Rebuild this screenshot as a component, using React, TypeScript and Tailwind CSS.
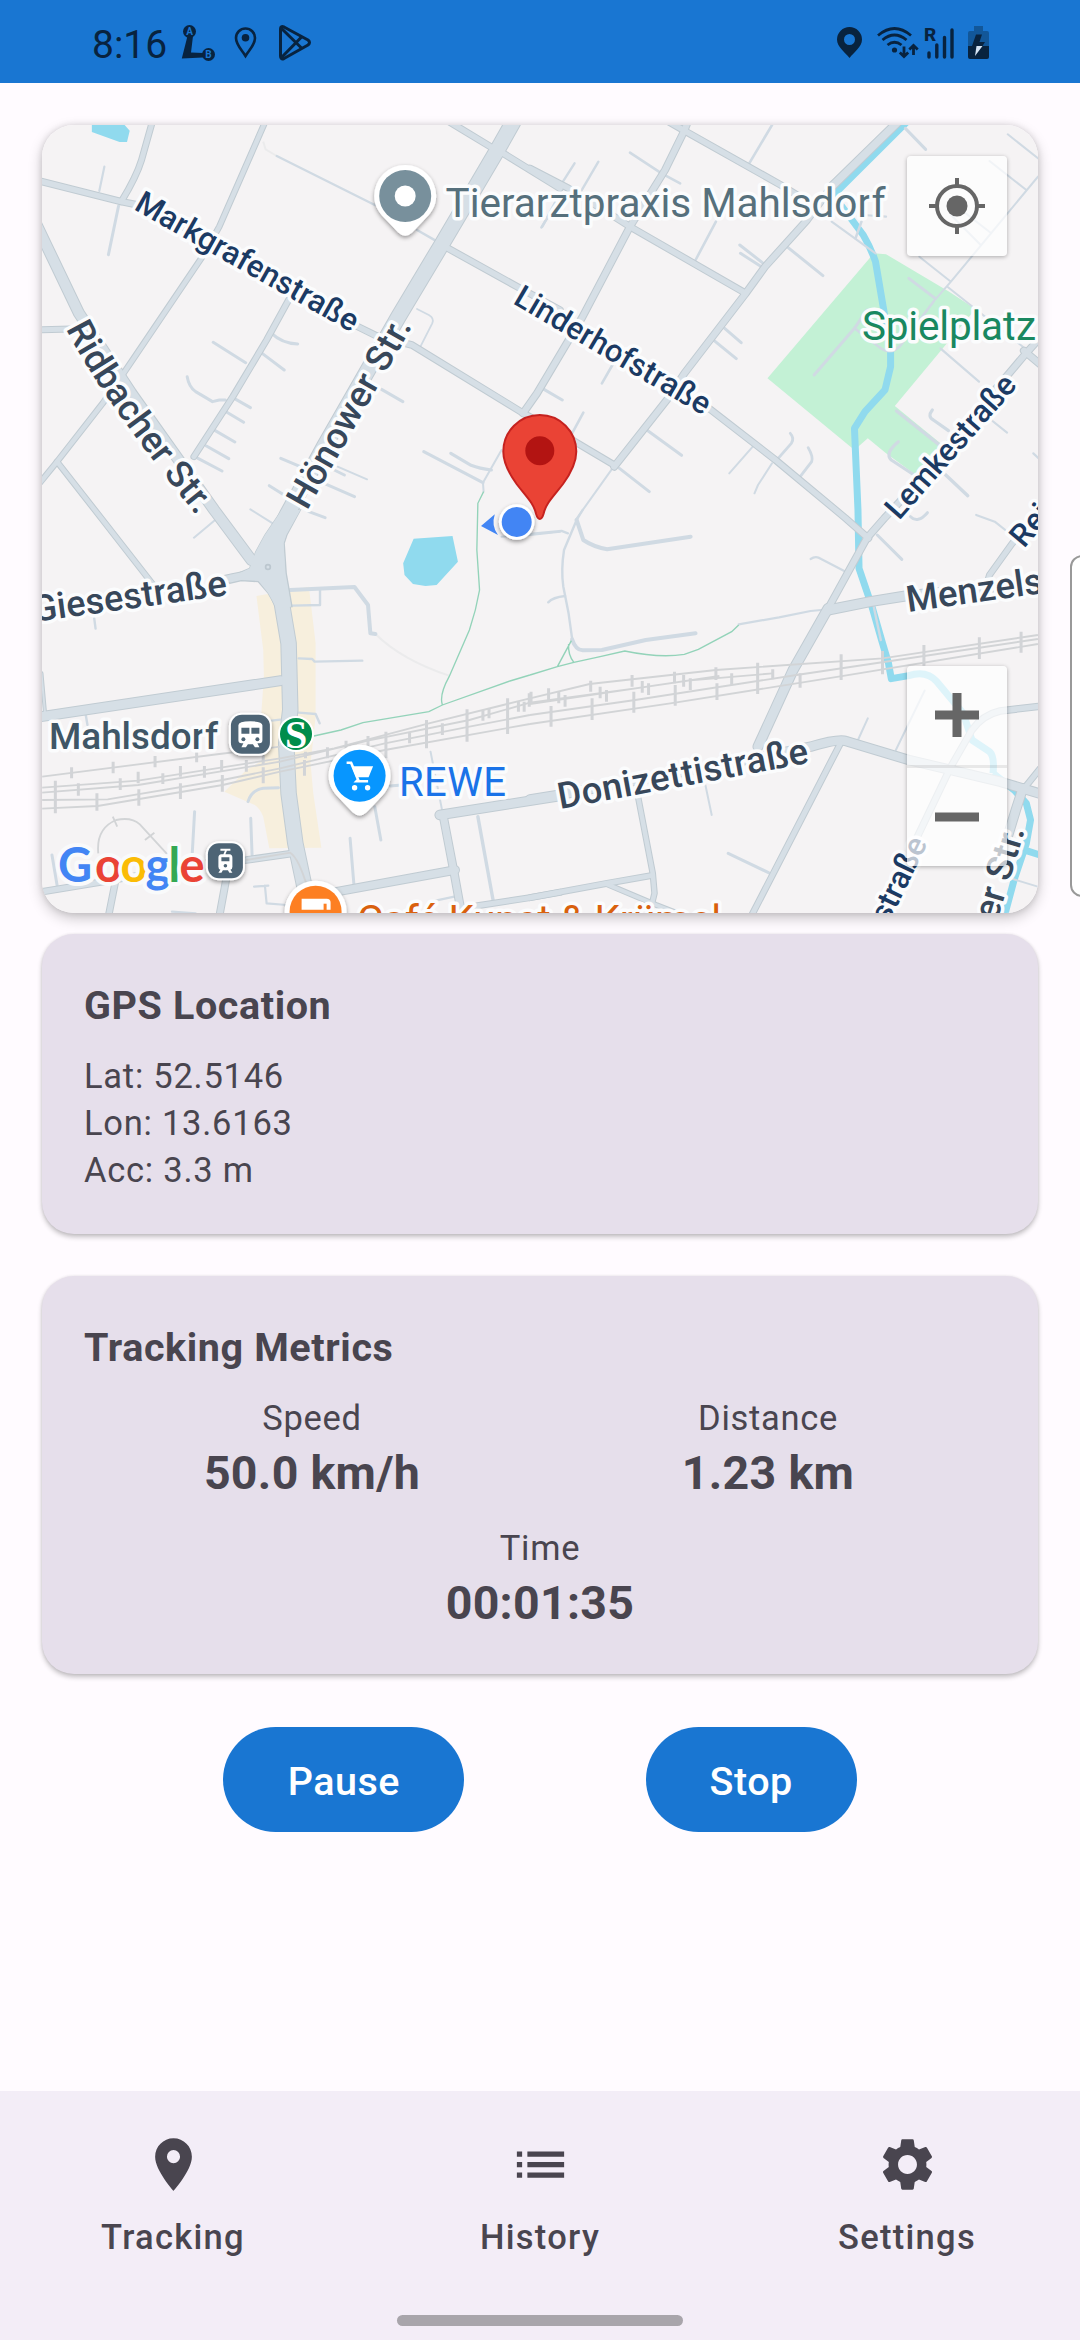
import type { ReactNode } from "react";
import { MdList, MdLocationOn, MdSettings } from "react-icons/md";

/* The map is drawn in two halves, each with its own survey grid. */
const WEST = "translate(30 110) scale(0.33801 0.33333)";
const EAST = "translate(530 110) scale(0.35077 0.33333)";

type Line = [width: number, d: string];

const westRoads: Line[] = [
  [7.5, "M20 211L270 275L320 285L420 330L640 470L960 645L1030 680L1130 705L1460 910L1600 990"],
  [7, "M362 35L330 150Q315 200 270 275"],
  [6.5, "M696 35L560 350L510 440L270 800L215 880L80 1055L20 1130"],
  [6.5, "M80 1055L215 1230L365 1425"],
  [7, "M20 660L120 657"],
  [7, "M765 570L700 690L600 860L485 1040"],
  [7.5, "M1240 35L1362 110L1400 130L1568 235"],
  [7.5, "M1210 400L1450 535L1568 600"],
  [11, "M20 1822L742 1712"],
  [4, "M34 1690L45 1815"],
  [7.5, "M20 2348L200 2318L330 2295L520 2260L640 2250L780 2230"],
  [7.5, "M252 2318L232 2420"],
  [8, "M580 2310L560 2420"],
  [9.5, "M860 2354L1258 2280"],
  [10.5, "M1212 2115L1568 2058"],
  [9, "M1222 2115L1255 2290L1280 2430"],
  [7, "M1275 2395L1479 2363L1568 2347"],
  [12, "M15 335L145 610L300 850L545 1200L655 1350L705 1370"],
  [9, "M560 1412L600 1403L655 1392L705 1375"],
  [16.5, "M1430 35L1380 125L1220 400L1090 620L870 1010L760 1215L705 1330L712 1400L745 1480L765 1600L770 1800L758 1900L765 2050L785 2200L812 2330L830 2420"],
];

const eastRoads: Line[] = [
  [7.5, "M0 175L110 235L240 320L285 350L615 550"],
  [7.5, "M395 35L440 62L715 225L800 280"],
  [7.5, "M0 600L510 895L700 1050L900 1225L965 1285"],
  [8, "M450 35L440 62L385 180L285 350L150 620L20 850L-20 910"],
  [7.5, "M120 990L240 1065"],
  [9.5, "M1050 35L860 230"],
  [8, "M860 230L790 330L670 470L615 550L440 790L390 870L240 1070"],
  [8, "M1470 665L1410 735L1370 785L1050 1180L1010 1225L960 1285L905 1390L850 1495"],
  [8, "M1408 722L1460 768"],
  [7, "M1450 1200L1375 1300L1310 1395L1300 1430"],
  [11, "M850 1500L970 1475L1070 1458L1460 1415"],
  [11, "M850 1495L750 1680L650 1910"],
  [10.5, "M0 2068L80 2055L640 1945L800 1910Q880 1885 900 1893L1080 1950L1340 2015L1460 2053"],
  [6.5, "M308 2060L350 2290L355 2350L348 2380"],
  [7, "M0 2363L220 2320L345 2297"],
  [6, "M220 2323L360 2385L440 2418"],
  [7, "M885 1900L630 2420"],
  [7.5, "M1460 1788L1340 1803Q1290 1815 1260 1860L1200 1970L1100 2190"],
  [7, "M1455 1975L1405 2040"],
  [10.5, "M1405 2035L1385 2100L1350 2220"],
];

const westLanes: Line[] = [
  [3, "M262 288L232 434"],
  [2.2, "M220 170L205 243"],
  [3, "M715 670Q745 700 792 702"],
  [3, "M680 725L752 780M542 697L638 758M600 863L652 893M580 905L632 937M548 962L606 996M522 1008L588 1046M497 1045L568 1083"],
  [3, "M465 800Q470 830 490 845L540 875L560 870L578 870"],
  [2.4, "M730 138L1020 285M1145 360L1200 392"],
  [1.8, "M1145 597L1180 615Q1197 625 1190 640L1155 710"],
  [3, "M1040 838L1103 875M742 1045L800 1070M900 1080L930 1095M870 1120L960 1160M708 1127L760 1160M825 1205L873 1223"],
  [2, "M910 1070L997 1108M652 1198L718 1240M545 1232L485 1283"],
  [3.2, "M1165 1025L1340 1118M1245 1030L1305 1066Q1330 1076 1365 1080"],
  [2, "M1395 1020L1340 1118L1342 1145"],
  [2.6, "M1530 325L1513 352"],
  [2, "M1395 1280L1480 1275L1568 1265"],
  [2.4, "M165 1815L170 1845M190 1525L194 1556M715 1832L740 1829"],
  [3, "M645 2075Q655 2040 690 2035L735 2033"],
  [4, "M770 1440L960 1431L1000 1485L1007 1570L1022 1572"],
  [2.4, "M775 1487L858 1485L858 1440M795 1645L835 1647L842 1655L983 1652M795 1808L845 1812L857 1840"],
  [3.4, "M1325 2120L1370 2370"],
  [2, "M1185 1925L1220 2105"],
  [3, "M1020 2090L1038 2190M947 2185L958 2320M1065 2028L1100 2025M487 2105L480 2230M653 2125L657 2235M65 2235L80 2325"],
  [2.2, "M663 2330L705 2327M695 2327L700 2380L760 2385M1200 2372L1255 2360M420 2405L490 2410"],
];

const eastLanes: Line[] = [
  [2.6, "M690 45L625 160M530 335L472 450M235 765L205 820M152 908L120 970"],
  [2.4, "M127 160L92 218M195 155L145 245M75 270L35 350"],
  [2.6, "M285 128L375 190L428 220"],
  [3, "M598 405L665 460M600 430L662 472M735 412L835 497M555 655L602 698M525 692L588 746M35 835L92 870M333 960L432 1036M255 1075L340 1145"],
  [2, "M635 1010L568 1090M690 1060L650 1125L640 1150M235 1075L130 1230"],
  [2.8, "M742 970Q755 985 745 1000L705 1048M793 1013Q808 1040 803 1055L768 1103"],
  [3, "M1070 55L1128 118"],
  [2, "M1362 73L1448 145M1310 153L1415 240M1448 200L1200 515L1150 575M1110 440L1200 515M1190 530L1405 710M1200 315L1285 405M1230 300L1315 370"],
  [2.6, "M1150 575L1100 645L1055 708Q1030 735 1000 715L925 655"],
  [3, "M1080 505L1155 565M810 795L925 655L960 600"],
  [2.2, "M1170 715L1280 815M1315 930L1360 968M1435 1030L1455 1050"],
  [3.4, "M1045 903L1165 1003M1180 1090L1248 1157"],
  [3.2, "M1050 995Q1010 1030 1030 1050L1095 1095M1147 900Q1132 920 1150 930L1193 962"],
  [2.2, "M860 335L985 430M950 315L1015 320"],
  [2.6, "M945 335L928 385"],
  [3, "M990 1275L1060 1348M1085 1220Q1105 1242 1133 1208"],
  [2.2, "M1272 1215L1325 1235L1355 1260M800 1347Q815 1336 830 1347L900 1385"],
  [2.2, "M830 1500L800 1503L710 1522L595 1543"],
  [4, "M133 1230L152 1290Q180 1310 220 1318L458 1280"],
  [2.4, "M150 1200L133 1230L97 1320Q88 1380 95 1430L110 1510L120 1585"],
  [4, "M120 1588Q130 1620 150 1621L205 1620L330 1590L472 1570"],
  [2.4, "M0 1272L90 1263L108 1270M52 1477Q65 1462 100 1458"],
  [2, "M1125 1742L1043 1920M963 1825L935 1890M500 2025L518 2115M1370 2305L1448 2330"],
  [2.4, "M980 1490L1000 1590"],
  [3, "M565 2230L680 2288"],
];

/* Sleepers crossing the railway: [x, top, bottom]. */
const westTicks = [
  [123, 772, 805], [246, 755, 790], [370, 738, 772], [493, 722, 757], [75, 812, 910], [143, 820, 857], [198, 850, 902],
  [267, 805, 840], [320, 785, 820], [322, 838, 887], [393, 790, 822], [445, 768, 800], [445, 820, 867], [516, 768, 803],
  [567, 750, 785], [569, 795, 845], [640, 750, 785], [690, 735, 765], [690, 772, 820], [812, 750, 797], [815, 725, 745],
  [880, 712, 745], [935, 692, 720], [1000, 678, 710], [1053, 665, 745], [1123, 668, 700], [1173, 630, 715], [1220, 640, 675],
  [1293, 598, 695], [1340, 600, 632], [1358, 595, 625], [1413, 565, 672], [1445, 575, 605], [1462, 575, 605], [1477, 550, 590],
];
const eastTicks = [
  [3, 545, 580], [53, 535, 570], [60, 588, 650], [82, 545, 580], [100, 555, 590], [173, 512, 545], [177, 565, 630],
  [200, 530, 565], [218, 540, 575], [291, 495, 530], [296, 545, 608], [320, 513, 548], [338, 520, 555], [412, 485, 520],
  [414, 525, 587], [438, 495, 530], [457, 505, 540], [530, 472, 510], [533, 520, 570], [575, 490, 525], [649, 458, 552],
  [692, 478, 508], [770, 490, 533], [887, 433, 510], [1005, 423, 493], [1123, 405, 467], [1281, 382, 447], [1400, 365, 428],
];

function Lines({ lines, color, grow = 0 }: { lines: Line[]; color: string; grow?: number }) {
  return (
    <g fill="none" stroke={color} strokeLinecap="round" strokeLinejoin="round">
      {lines.map(([w, d], i) => (
        <path key={i} d={d} strokeWidth={w + grow} vectorEffect="non-scaling-stroke" />
      ))}
    </g>
  );
}

function Ticks({ ticks }: { ticks: number[][] }) {
  return (
    <path
      d={ticks.map(([x, a, b]) => `M${x} ${a + 1200}L${x} ${b + 1200}`).join("")}
      stroke="#d2d4d7"
      strokeWidth={3}
      vectorEffect="non-scaling-stroke"
      fill="none"
    />
  );
}

interface LabelProps {
  x: number;
  y: number;
  size: number;
  color: string;
  children: ReactNode;
  length?: number;
  rotate?: number;
  weight?: number;
  anchor?: "start" | "end";
}

function Label({ x, y, size, color, children, length, rotate = 0, weight = 500, anchor = "start" }: LabelProps) {
  return (
    <text
      transform={`translate(${x} ${y}) rotate(${rotate})`}
      fontSize={size}
      fontWeight={weight}
      fill={color}
      textLength={length}
      textAnchor={anchor}
      stroke="#fbfcfd"
      strokeWidth={7}
      strokeLinejoin="round"
      paintOrder="stroke"
    >
      {children}
    </text>
  );
}

function PlacePin({ x, y, color, children }: { x: number; y: number; color: string; children: ReactNode }) {
  return (
    <g transform={`translate(${x} ${y})`}>
      <path
        d="M0 -31A31 31 0 0 1 31 0C31 11 25 18 18 25L7 36.500Q0 43 -7 36.500L-18 25C-25 18 -31 11 -31 0A31 31 0 0 1 0 -31Z"
        fill="#fff"
        filter="url(#soft)"
      />
      <circle r="26" fill={color} />
      {children}
    </g>
  );
}

const NAVY = "#1b3a63";
const SLATE = "#37475a";

function CityMap() {
  return (
    <svg className="block h-full w-full" viewBox="42 125 996 788" preserveAspectRatio="none" fontFamily="Roboto, sans-serif">
      <defs>
        <filter id="soft" x="-30%" y="-30%" width="160%" height="170%">
          <feDropShadow dx="0" dy="2" stdDeviation="2" floodColor="#000" floodOpacity="0.4" />
        </filter>
        <path id="ridbacher" d="M66 329Q100 398 210 532" />
      </defs>
      <rect x="42" y="125" width="996" height="788" fill="#f5f3f4" />

      <g transform={WEST}>
        <path d="M670 1458L825 1430L845 1600L845 1820L830 1960L838 2050L862 2213L708 2215L690 2120Q680 2095 665 2085L575 2045L640 1980L690 1950L685 1800L692 1700L690 1620Z" fill="#f7efdd" />
        <path d="M183 45L280 45L295 62L287 96L265 96L183 66ZM1135 1286L1250 1278L1266 1355L1203 1425L1170 1428L1133 1422L1108 1395L1104 1360Z" fill="#90daee" />
      </g>
      <g transform={EAST}>
        <path d="M980 430L1015 433L1195 545L1270 597L1040 888L1170 1000L1185 1020L1100 1095L1015 1030L963 985L925 1020L677 805Z" fill="#c3f1d5" />
        <g fill="none" stroke="#90daee" strokeLinejoin="round">
          <path d="M1075 35L865 255L950 375Q970 410 985 455L1010 610L1028 720L1028 770L1012 840L955 905L925 955L935 1200L938 1375L975 1490L1005 1600L1022 1660L1030 1706L1080 1697Q1130 1680 1160 1715L1235 1810L1260 1890L1310 1925Q1325 1940 1320 1990" strokeWidth="7" vectorEffect="non-scaling-stroke" />
          <path d="M1320 1990L1380 2040L1415 2080L1427 2130L1415 2200L1380 2310L1352 2420M1415 2222L1460 2237" strokeWidth="7" vectorEffect="non-scaling-stroke" />
        </g>
      </g>

      <g transform={WEST}>
        <path d="M690 95L697 118L730 138M1022 1572Q1100 1650 1240 1697" stroke="#ebebec" strokeWidth="2" fill="none" vectorEffect="non-scaling-stroke" />
        <Lines lines={westLanes} color="#d0dae3" />
      </g>
      <g transform={EAST}>
        <Lines lines={eastLanes} color="#d0dae3" />
      </g>

      <g transform={WEST}>
        <Lines lines={westRoads} color="#c0cbd2" />
        <path d="M745 1200L695 1275L668 1325L650 1375L615 1390L590 1395L590 1420L625 1412L675 1415L705 1450L730 1495L775 1490L765 1430L758 1390L752 1300L760 1275L800 1200Z" fill="#d6dfe6" stroke="#c0cbd2" strokeWidth="4" />
      </g>
      <g transform={EAST}>
        <Lines lines={eastRoads} color="#c0cbd2" />
      </g>
      <g transform={WEST}>
        <Lines lines={westRoads} color="#d6dfe6" grow={-2} />
        <path d="M745 1200L695 1275L668 1325L650 1375L600 1400L675 1410L705 1450L730 1495L772 1490L762 1430L755 1390L750 1300L758 1275L800 1200Z" fill="#d6dfe6" />
        <ellipse cx="704" cy="1371" rx="7" ry="7" fill="none" stroke="#bcc7cf" strokeWidth="5" />
      </g>
      <g transform={EAST}>
        <Lines lines={eastRoads} color="#d6dfe6" grow={-2} />
      </g>

      <g transform={WEST}>
        <g fill="none" stroke="#d2d4d6" strokeWidth="5.500">
          <path d="M36 2000L560 1932L740 1910M36 2033L320 2012L740 1945L900 1915L1180 1840L1400 1785L1479 1765M36 2048L320 2025L740 1955L1000 1892L1300 1830L1479 1778M36 2070L230 2068L570 2010L740 1975L1050 1900L1300 1850L1479 1815M36 2096L200 2088L570 2025L740 1985L1050 1920L1479 1842" />
          <path d="M202 2230Q195 2155 255 2130Q300 2120 325 2143L420 2248M245 2120L258 2150M340 2190L368 2168M640 2250L770 2228Q795 2245 820 2330" />
        </g>
        <Ticks ticks={westTicks} />
        <path d="M1342 1145L1325 1180L1322 1320L1330 1440Q1320 1500 1300 1560L1240 1700Q1210 1755 1220 1785M1479 1695L1420 1713L1220 1785L1180 1805L985 1838L920 1860L840 1878" fill="none" stroke="#93d3b9" strokeWidth="4" />
      </g>
      <g transform={EAST}>
        <path d="M0 1765L170 1722L530 1680L1005 1645L1448 1575M0 1778L300 1735L540 1698M0 1782L450 1712L692 1690M0 1815L300 1770L760 1695L1448 1587M0 1842L400 1780L880 1700L1448 1602" fill="none" stroke="#d2d4d6" strokeWidth="5.500" />
        <Ticks ticks={eastTicks} />
        <path d="M595 1545L575 1565L480 1618L440 1633Q370 1645 270 1623L200 1640L125 1657L78 1670L0 1695M78 1670L118 1592M110 1602Q108 1635 125 1657" fill="none" stroke="#93d3b9" strokeWidth="4" />
      </g>

      <Label x={133} y={209} rotate={29.500} size={31.500} length={251} color={NAVY}>Markgrafenstraße</Label>
      <Label x={512} y={303} rotate={30.500} size={31.500} length={222} color={NAVY}>Linderhofstraße</Label>
      <Label x={899} y={521} rotate={-48.700} size={31.500} length={180} color={NAVY}>Lemkestraße</Label>
      <Label x={1024} y={549} rotate={-50} size={31.500} color={NAVY}>Rei</Label>
      <Label x={928} y={843} rotate={-64} size={31.500} color={NAVY} anchor="end">straße</Label>
      <text fontSize="36.500" fontWeight="500" fill={SLATE} stroke="#fbfcfd" strokeWidth="7" strokeLinejoin="round" paintOrder="stroke">
        <textPath href="#ridbacher" textLength="229">Ridbacher Str.</textPath>
      </text>
      <Label x={307} y={511} rotate={-60.300} size={36.500} length={213} color={SLATE}>Hönower Str.</Label>
      <Label x={34} y={622} rotate={-7.900} size={36.500} length={196} color={SLATE}>Giesestraße</Label>
      <Label x={908} y={612} rotate={-8} size={36.500} color={SLATE}>Menzels</Label>
      <Label x={560} y={809} rotate={-10.500} size={36.500} length={254} color={SLATE}>Donizettistraße</Label>
      <Label x={1025} y={830} rotate={-73} size={36.500} color={SLATE} anchor="end">er Str.</Label>

      <Label x={445.500} y={217} size={40.500} length={440} weight={400} color="#56707c">Tierarztpraxis Mahlsdorf</Label>
      <Label x={862} y={339.500} size={40.500} length={174} weight={400} color="#198860">Spielplatz</Label>
      <Label x={49} y={748.500} size={37} length={169} color="#3f5666">Mahlsdorf</Label>
      <Label x={399} y={796} size={40} length={107} weight={400} color="#1a73e8">REWE</Label>
      <Label x={357} y={933.500} size={40.500} length={364} weight={400} color="#d9610e">Café Kunst &amp; Krümel</Label>

      <PlacePin x={405.200} y={196} color="#78909c">
        <circle r="10.500" fill="#fff" />
      </PlacePin>
      <PlacePin x={359.600} y={775.700} color="#0796ff">
        <path d="M-13 -13H-8.500L-1.500 4L-3 5.500H8.500" fill="none" stroke="#fff" strokeWidth="2.600" />
        <path d="M-8 -9.500H13.500L9 1.500H-3.500Z" fill="#fff" />
        <circle cx="-5" cy="12" r="2.700" fill="#fff" />
        <circle cx="8" cy="12" r="2.700" fill="#fff" />
      </PlacePin>
      <PlacePin x={315.600} y={911.700} color="#fd7f22">
        <path d="M-14 -13H11Q15 -13 15 -9V-2H-14Z" fill="#fff" />
        <path d="M8 -8H11V0H8Z" fill="#fd7f22" />
      </PlacePin>

      <g transform="translate(250.400 734.300)">
        <rect x="-21.500" y="-21.500" width="43" height="43" rx="13" fill="#fff" filter="url(#soft)" />
        <rect x="-19.500" y="-19.500" width="39" height="39" rx="11" fill="#4d6475" />
        <path d="M-12 -9Q-12 -13 0 -13Q12 -13 12 -9V6Q12 9 9 9H7L9 13H4.500L2.500 10H-2.500L-4.500 13H-9L-7 9H-9Q-12 9 -12 6Z" fill="#fff" />
        <path d="M-9 -6.500H-1V-0.500H-9ZM1 -6.500H9V-0.500H1Z" fill="#4d6475" />
        <circle cx="-7" cy="5" r="2" fill="#4d6475" />
        <circle cx="7" cy="5" r="2" fill="#4d6475" />
      </g>
      <g transform="translate(296 734)">
        <circle r="18" fill="#fff" />
        <circle r="16" fill="#008d4b" />
        <text x="0" y="13.500" textAnchor="middle" fontFamily="Liberation Serif, serif" fontSize="40" fontWeight="700" fill="#fff">S</text>
      </g>

      <text y="881.500" fontFamily="Lato, sans-serif" fontSize="47" fontWeight="700" stroke="#f9fafb" strokeWidth="8" strokeLinejoin="round" paintOrder="stroke">
        <tspan x="58" fill="#4285f4">G</tspan>
        <tspan x="95" fill="#ea4335">o</tspan>
        <tspan x="120.500" fill="#fbbc05">o</tspan>
        <tspan x="145.500" fill="#4285f4">g</tspan>
        <tspan x="168.500" fill="#34a853">l</tspan>
        <tspan x="179.500" fill="#ea4335">e</tspan>
      </text>
      <g transform="translate(225.400 860.700)">
        <rect x="-19.500" y="-19.500" width="39" height="39" rx="13" fill="#fff" filter="url(#soft)" />
        <rect x="-17.500" y="-17.500" width="35" height="35" rx="11" fill="#4d6475" />
        <path d="M-5 -12H5V-10H1.500L0 -6.500H4Q7 -6.500 7 -3V6Q7 8.500 5 9L7 12H4L2.500 9.500H-2.500L-4 12H-7L-5 9Q-7 8.500 -7 6V-3Q-7 -6.500 -4 -6.500H-2L-0.500 -10H-5Z" fill="#fff" />
        <path d="M-4 -3.500H4V0.500H-4Z" fill="#4d6475" />
        <circle cy="5" r="1.800" fill="#4d6475" />
      </g>

      <path d="M481 526L494.800 514.300Q491 526 498 535Z" fill="#4285f4" />
      <circle cx="516.700" cy="522" r="17.800" fill="#fff" filter="url(#soft)" />
      <circle cx="516.700" cy="522" r="15" fill="#4285f4" />
      <path
        d="M539.800 415A36.500 36.500 0 0 1 576.300 451.500C576.300 463 571 473 563 484C553 497 546 503 543.500 514Q542 519 539.800 519Q537.600 519 536.100 514C533.600 503 526.600 497 516.600 484C508.600 473 503.300 463 503.300 451.500A36.500 36.500 0 0 1 539.800 415Z"
        fill="#ea4335"
        stroke="#c5221f"
        strokeWidth="2"
      />
      <circle cx="539.800" cy="450.700" r="14.500" fill="#b31412" />
    </svg>
  );
}

function StatusBar() {
  return (
    <header className="flex h-[83px] items-start bg-[#1976d2] pl-[92px] text-[#08233f]">
      <span className="mt-[22px] w-[75px] text-[39px] leading-[46px] whitespace-nowrap">8:16</span>
      <svg className="mt-[24px] ml-[14px] h-[38px] w-[36px]" viewBox="181 24 36 38">
        <path d="M187.500 36L181.800 58.500L203 57.500V53L191 52.500L193 36Z" fill="currentColor" />
        <circle cx="189.500" cy="31.500" r="6.500" fill="currentColor" />
        <circle cx="208.500" cy="54.500" r="6.500" fill="currentColor" />
        <text x="189.500" y="35" textAnchor="middle" fontSize="10" fontWeight="700" fill="#1976d2">A</text>
        <text x="208.500" y="58" textAnchor="middle" fontSize="10" fontWeight="700" fill="#1976d2">B</text>
      </svg>
      <svg className="mt-[26px] ml-[16px] h-[34px] w-[26px]" viewBox="233 26 26 34">
        <path d="M245.500 28.500A9.500 9.500 0 0 1 255 38C255 45 249 50 245.500 56C242 50 236 45 236 38A9.500 9.500 0 0 1 245.500 28.500Z" fill="none" stroke="currentColor" strokeWidth="2.600" />
        <circle cx="245.500" cy="37.800" r="3.800" fill="currentColor" />
      </svg>
      <svg className="mt-[24px] ml-[19px] h-[38px] w-[36px]" viewBox="278 24 36 38" fill="none" stroke="currentColor" strokeWidth="3" strokeLinejoin="round">
        <path d="M280.500 29Q280.500 25.500 284 27L308 40Q311 42.500 308 45L284 58.500Q280.500 60 280.500 56Z" />
        <path d="M281 28L302 48.500M281 58L302 36.500" />
      </svg>
      <svg className="mt-[26px] ml-[522px] h-[34px] w-[28px]" viewBox="835 26 28 34">
        <path fillRule="evenodd" d="M848.500 27A12.500 12.500 0 0 1 861 39.500C861 47 853 52 848.500 58C844 52 836 47 836 39.500A12.500 12.500 0 0 1 848.500 27ZM848.500 34A5.500 5.500 0 1 0 848.500 45A5.500 5.500 0 1 0 848.500 34Z" fill="currentColor" />
      </svg>
      <svg className="mt-[24px] ml-[12px] h-[38px] w-[45px]" viewBox="875 24 45 38" fill="none" stroke="currentColor" strokeWidth="2.800">
        <path d="M877 35.500Q893.500 21.500 910 35.500M881.500 40Q893.500 30 905.500 40M886.500 45Q893.500 39.500 900.500 45" />
        <circle cx="893.500" cy="50" r="2.600" fill="currentColor" stroke="none" />
        <path d="M903 46.500V56M898.800 52.500L903 56.500L907.200 52.500M912.500 55V45.500M908.300 49.500L912.500 45.500L916.700 49.500" />
      </svg>
      <svg className="mt-[24px] ml-[2px] h-[38px] w-[34px]" viewBox="922 24 34 38">
        <text x="923" y="40.500" fontSize="19" fontWeight="800" fill="currentColor">R</text>
        <path d="M928 53V57M935.800 45V57M943.500 37.500V57M951 30V57" stroke="currentColor" strokeWidth="3.400" strokeLinecap="round" />
      </svg>
      <svg className="mt-[24px] ml-[10px] h-[38px] w-[24px]" viewBox="966 24 24 38">
        <path d="M973 26H982V31H986Q988 31 988 33V46H967V33Q967 31 969 31H973Z" fill="#125799" />
        <path d="M967 46H988V57Q988 59 986 59H969Q967 59 967 57Z" fill="#08233f" />
        <path d="M975 34.500H981L978.500 42H984L981.500 46H971Z" fill="#08233f" />
        <path d="M975.500 46H981.500L974 56Z" fill="#d5e4f4" />
      </svg>
    </header>
  );
}

function Metric({ label, value }: { label: string; value: string }) {
  return (
    <div className="flex flex-col items-center">
      <span className="text-[34.5px] leading-[47px] tracking-[0.7px]">{label}</span>
      <span className="text-[46.5px] leading-[63px] font-bold tracking-[0.3px]">{value}</span>
    </div>
  );
}

function NavItem({ icon, label }: { icon: ReactNode; label: string }) {
  return (
    <a className="flex w-[346px] flex-col items-center gap-[20px]">
      {icon}
      <span className="text-[34.5px] leading-[43px] font-medium tracking-[1.3px]">{label}</span>
    </a>
  );
}

const cardClass =
  "rounded-[32px] bg-[#e6dfeb] px-[42px] shadow-[0_3px_5px_rgba(0,0,0,0.24),0_0_3px_rgba(0,0,0,0.08)]";

export default function App() {
  return (
    <div className="relative flex h-[2340px] w-[1080px] flex-col overflow-hidden bg-[#fffbff] font-[Roboto,sans-serif] text-[#49454f]">
      <StatusBar />
      <main className="flex flex-1 flex-col px-[42px] pt-[42px]">
        <section className="relative h-[788px] shrink-0 rounded-[32px] shadow-[0_5px_14px_rgba(0,0,0,0.22),0_0_6px_rgba(0,0,0,0.12)]">
          <div className="h-full overflow-hidden rounded-[32px]">
            <CityMap />
          </div>
          <button className="absolute top-[31px] right-[31px] flex size-[100px] items-center justify-center rounded-[4px] bg-white/70 shadow-[0_1px_4px_rgba(0,0,0,0.3)]">
            <svg className="size-[58px]" viewBox="-29 -29 58 58">
              <circle r="20" fill="none" stroke="#666" strokeWidth="4" />
              <circle r="10.500" fill="#666" />
              <path d="M0 -28V-20M0 28V20M-28 0H-20M28 0H20" stroke="#666" strokeWidth="4" />
            </svg>
          </button>
          <div className="absolute right-[31px] bottom-[47px] flex h-[200px] w-[100px] flex-col rounded-[4px] bg-white/70 shadow-[0_1px_4px_rgba(0,0,0,0.3)]">
            <button className="flex flex-1 items-center justify-center border-b-[3px] border-black/8">
              <svg className="size-[44px]" viewBox="0 0 44 44">
                <path d="M0 22H44M22 0V44" stroke="#666" strokeWidth="9" />
              </svg>
            </button>
            <button className="flex flex-1 items-center justify-center">
              <svg className="size-[44px]" viewBox="0 0 44 44">
                <path d="M0 22H44" stroke="#666" strokeWidth="9" />
              </svg>
            </button>
          </div>
        </section>

        <section className={`mt-[21px] h-[300px] shrink-0 pt-[43px] ${cardClass}`}>
          <h2 className="text-[39.5px] leading-[57px] font-bold tracking-[0.6px]">GPS Location</h2>
          <p className="mt-[19px] text-[34.5px] leading-[47px] tracking-[0.75px]">Lat: 52.5146</p>
          <p className="text-[34.5px] leading-[47px] tracking-[0.75px]">Lon: 13.6163</p>
          <p className="text-[34.5px] leading-[47px] tracking-[0.75px]">Acc: 3.3 m</p>
        </section>

        <section className={`mt-[42px] h-[398px] shrink-0 pt-[43px] ${cardClass}`}>
          <h2 className="text-[39.5px] leading-[57px] font-bold tracking-[0.6px]">Tracking Metrics</h2>
          <div className="mt-[19px] grid grid-cols-2">
            <Metric label="Speed" value="50.0 km/h" />
            <Metric label="Distance" value="1.23 km" />
          </div>
          <div className="mt-[20px]">
            <Metric label="Time" value="00:01:35" />
          </div>
        </section>

        <div className="mt-[53px] flex justify-evenly">
          <button className="h-[105px] w-[241px] rounded-full bg-[#1976d2] pt-[5px] text-[39.5px] font-medium tracking-[0.5px] text-white">Pause</button>
          <button className="h-[105px] w-[211px] rounded-full bg-[#1976d2] pt-[5px] text-[39.5px] font-medium tracking-[0.5px] text-white">Stop</button>
        </div>
      </main>

      <nav className="relative flex h-[249px] items-start justify-center gap-[21px] bg-[#f3edf7] pt-[42px]">
        <NavItem icon={<MdLocationOn className="size-[63px]" />} label="Tracking" />
        <NavItem icon={<MdList className="size-[63px]" />} label="History" />
        <NavItem icon={<MdSettings className="size-[63px]" />} label="Settings" />
        <span className="absolute bottom-[14px] left-[397px] h-[11px] w-[286px] rounded-full bg-[#a8a5ab]" />
      </nav>

      <aside className="absolute top-[555px] -right-[20px] h-[342px] w-[30px] rounded-[12px] border-2 border-[#999] bg-white" />
    </div>
  );
}
